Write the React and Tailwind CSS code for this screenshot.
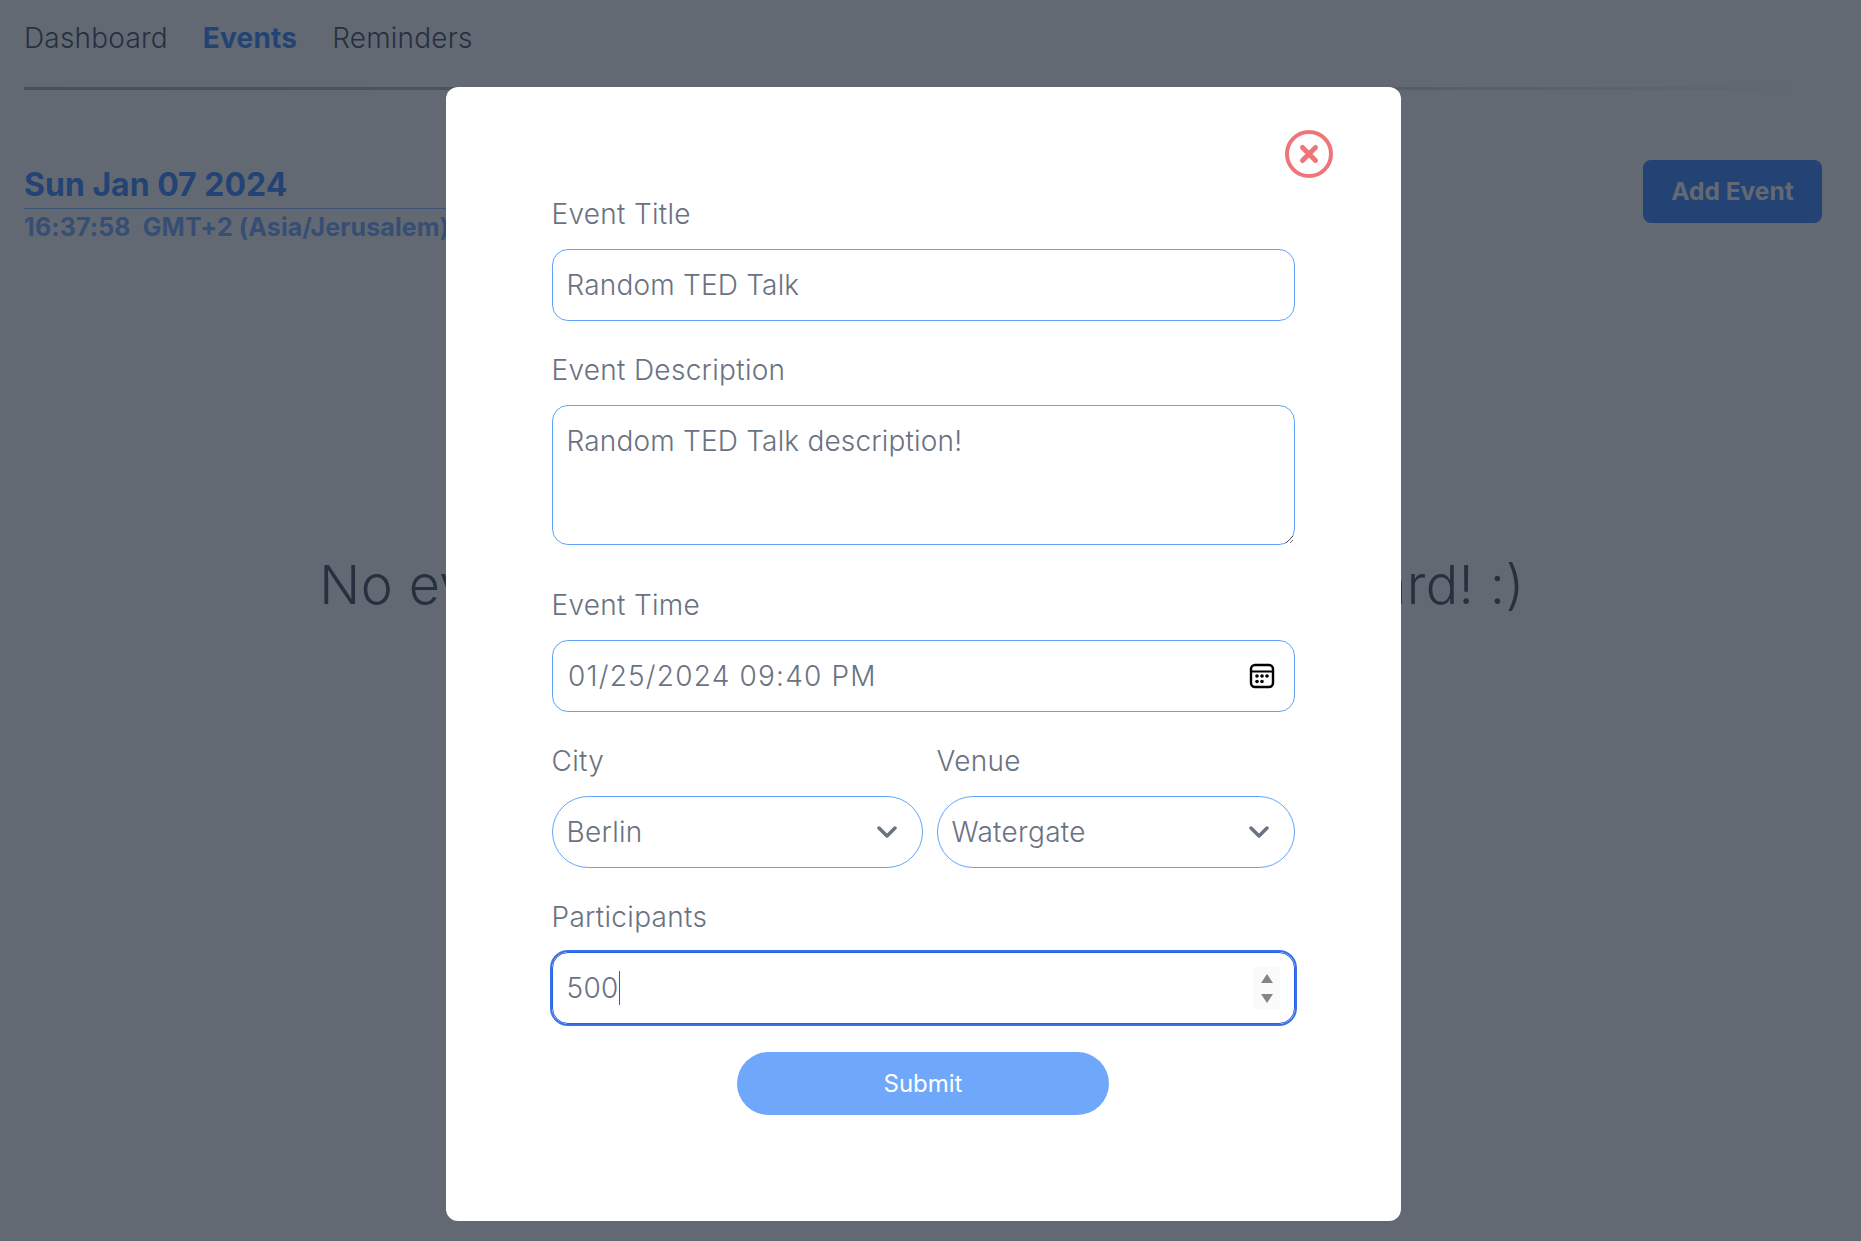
import React from 'react';

const inputBox = 'w-full h-[72px] rounded-2xl border border-[#60a5fa] bg-white pl-[13.5px] pr-[13px] text-[28px] font-[350] tracking-[0.18px] text-gray-500 outline-none';

const Label = ({ children }) => (
  <label className="block h-9 leading-9 mb-[17px] text-[28px] font-[350] tracking-[0.3px] text-gray-500 -ml-[0.5px]">{children}</label>
);

const Chevron = () => (
  <svg width="20" height="12" viewBox="0 0 20 12" fill="none" stroke="#6b7280" strokeWidth="3.5" strokeLinecap="round" strokeLinejoin="round">
    <path d="M2 2l8 8 8-8" />
  </svg>
);

const SelectBox = ({ value, className }) => (
  <div className={`h-[72px] rounded-full border border-[#60a5fa] flex items-center justify-between pl-[13.5px] text-[28px] font-[350] tracking-[0.3px] text-gray-500 ${className}`}>
    <span>{value}</span>
    <Chevron />
  </div>
);

const CalendarIcon = () => (
  <svg width="26" height="26" viewBox="0 0 26 26" fill="none" stroke="#000" strokeWidth="2.4">
    <rect x="2" y="2" width="22" height="22" rx="4" />
    <path d="M2 8.5h22" strokeWidth="2" />
    <g fill="#000" stroke="none">
      <circle cx="8" cy="13" r="1.8" />
      <circle cx="13" cy="13" r="1.8" />
      <circle cx="18" cy="13" r="1.8" />
      <circle cx="8" cy="18.5" r="1.8" />
      <circle cx="13" cy="18.5" r="1.8" />
    </g>
  </svg>
);

const CloseIcon = () => (
  <svg width="48" height="48" viewBox="0 0 48 48" fill="none" stroke="#f0757a">
    <circle cx="24" cy="24" r="22" strokeWidth="4" />
    <path d="M17.5 17.5l13 13M30.5 17.5l-13 13" strokeWidth="5" strokeLinecap="round" />
  </svg>
);

const Spinner = () => (
  <div className="w-[27px] h-[42px] bg-[#fafafa] flex flex-col items-center justify-center gap-[11px]">
    <svg width="12" height="9" viewBox="0 0 12 9" fill="#858585"><path d="M6 0l6 9H0z" /></svg>
    <svg width="12" height="9" viewBox="0 0 12 9" fill="#858585"><path d="M6 9l6-9H0z" /></svg>
  </div>
);

const Page = () => (
  <div className="h-[1241px] bg-white pl-6 pr-[39px]">
    <nav className="flex gap-[35px] pt-[18px] h-[87px] text-[28px] font-[350] tracking-[0.2px] leading-10 text-gray-700">
      <a>Dashboard</a>
      <a className="font-bold text-blue-500">Events</a>
      <a>Reminders</a>
    </nav>
    <div className="h-[3px] w-[1790px] bg-gradient-to-r from-[#a3a8b2] via-[#d4d7dc] via-[78%] to-white" />
    <div className="flex items-start justify-between mt-[70px]">
      <div className="w-[450px] text-blue-500 font-bold">
        <div className="h-[49px] leading-[49px] text-[32px] border-b border-blue-500/60">Sun Jan 07 2024</div>
        <div className="text-[25px] tracking-[0.1px] leading-9 whitespace-pre text-blue-500/70">16:37:58  GMT+2 (Asia/Jerusalem)</div>
      </div>
      <button className="w-[179px] h-[63px] rounded-lg bg-blue-500 text-white font-bold text-[24.5px]">Add Event</button>
    </div>
    <p className="mt-[304px] text-center text-[54px] leading-[72px] font-[350] tracking-[0.4px] text-gray-700 pr-[2px]">No events yet, add one from your dashboard! :)</p>
  </div>
);

export default function App() {
  return (
    <div className="relative h-[1241px] overflow-hidden font-['Inter',sans-serif]">
      <Page />
      <div className="absolute inset-0 bg-[#1f2937b3] flex justify-center pt-[87px] pr-[14px]">
        <div className="relative w-[955px] h-[1134px] bg-white rounded-xl pl-[106px] pr-[106px] pt-[109px]">
          <button className="absolute top-[43px] right-[68px]"><CloseIcon /></button>

          <Label>Event Title</Label>
          <input readOnly value="Random TED Talk" className={inputBox} />

          <div className="mt-[31px]">
            <Label>Event Description</Label>
            <textarea readOnly value="Random TED Talk description!" className="block w-full h-[140px] rounded-2xl border border-[#60a5fa] bg-white pl-[13.5px] pr-[13px] pt-[14px] text-[28px] font-[350] tracking-[0.18px] text-gray-500 outline-none" />
          </div>

          <div className="mt-[42px]">
            <Label>Event Time</Label>
            <div className="h-[72px] rounded-2xl border border-[#60a5fa] flex items-center justify-between pl-[15px] pr-[19px] text-[28px] font-[350] tracking-[1.2px] text-gray-500">
              <span>01/25/2024 09:40 PM</span>
              <CalendarIcon />
            </div>
          </div>

          <div className="mt-[31px] flex gap-[14px]">
            <div className="w-[371px]">
              <Label>City</Label>
              <SelectBox value="Berlin" className="pr-[25px]" />
            </div>
            <div className="flex-1">
              <Label>Venue</Label>
              <SelectBox value="Watergate" className="pr-[25px]" />
            </div>
          </div>

          <div className="mt-[31px]">
            <Label>Participants</Label>
            <div className="h-[72px] rounded-2xl border border-[#2563eb] ring-2 ring-[#3b6fe8] flex items-center justify-between pl-[13.5px] pr-[14px] text-[28px] font-[350] tracking-[0.3px] text-gray-500">
              <span className="flex items-center">500<span className="w-px h-[34px] bg-gray-600" /></span>
              <Spinner />
            </div>
          </div>

          <div className="flex justify-center mt-[28px] pr-px">
            <button className="w-[372px] h-[63px] rounded-full bg-[#6fa8fb] text-white text-[24px] font-normal">Submit</button>
          </div>
        </div>
      </div>
    </div>
  );
}
